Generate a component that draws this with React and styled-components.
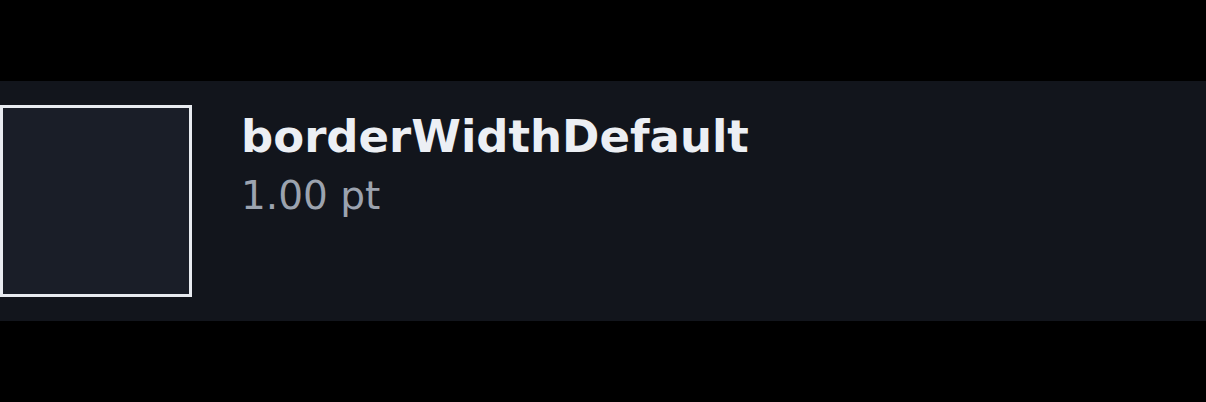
import React from "react";
import styled, { createGlobalStyle } from "styled-components";

const Global = createGlobalStyle`
  html, body { margin: 0; padding: 0; background: #000; }
  body { width: 1206px; height: 402px; overflow: hidden; font-family: "DejaVu Sans", "Noto Sans", sans-serif; }
`;

const Page = styled.div`
  height: 402px;
  display: flex;
  flex-direction: column;
  justify-content: center;
`;

const Row = styled.div`
  display: flex;
  align-items: flex-start;
  gap: 49px;
  height: 240px;
  box-sizing: border-box;
  padding: 24px 0;
  background: #12151c;
`;

const Swatch = styled.div`
  width: 192px;
  height: 192px;
  box-sizing: border-box;
  border: ${(p) => p.$border}px solid #e8ebf0;
  background: #1a1e28;
  flex: none;
`;

const Info = styled.div`
  display: flex;
  flex-direction: column;
  padding-top: 6px;
`;

const Name = styled.div`
  font-weight: 700;
  font-size: 45px;
  line-height: 52px;
  color: #eceff4;
`;

const Value = styled.div`
  margin-top: 10px;
  font-size: 39px;
  line-height: 46px;
  color: #9ca3af;
`;

export default function App() {
  return (
    <>
      <Global />
      <Page>
        <Row>
          <Swatch $border={3} />
          <Info>
            <Name>borderWidthDefault</Name>
            <Value>1.00 pt</Value>
          </Info>
        </Row>
      </Page>
    </>
  );
}
